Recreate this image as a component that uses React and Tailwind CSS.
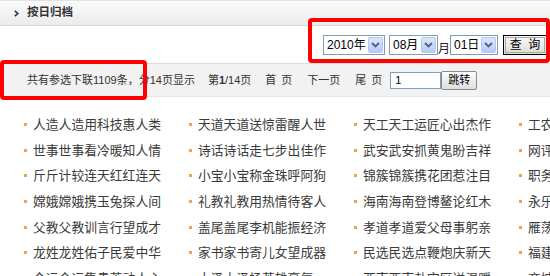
import React from "react";

const cols = [
  ["人造人造用科技惠人类", "世事世事看冷暖知人情", "斤斤计较连天红红连天", "嫦娥嫦娥携玉兔探人间", "父教父教训言行望成才", "龙姓龙姓佑子民爱中华", "今运今运集贵萃动人心"],
  ["天道天道送惊雷醒人世", "诗话诗话走七步出佳作", "小宝小宝称金珠呼阿狗", "礼教礼教用热情待客人", "盖尾盖尾李机能振经济", "家书家书寄儿女望成器", "大泽大泽扬英雄豪气"],
  ["天工天工运匠心出杰作", "武安武安抓黄鬼盼吉祥", "锦簇锦簇携花团惹注目", "海南海南登博鳌论红木", "孝道孝道爱父母事躬亲", "民选民选点鞭炮庆新天", "西南西南赴灾区送温暖"],
  ["工农工农建国家展宏图", "网评网评论时事说真话", "职务职务尽责任为人民", "永乐永乐兴盛世颂太平", "雁荡雁荡观奇峰赏秀水", "福建福建迎宾客话团圆", "商城商城聚百货惠万家"],
];

const rows = [0, 1, 2, 3, 4, 5, 6];

function Arrow() {
  return (
    <div className="w-[15px] h-[16px] mr-[1px] rounded-[2px] border border-[#b5c8f2] bg-gradient-to-b from-[#dde7fc] to-[#b7cbf6] flex items-center justify-center">
      <svg width="9" height="6" viewBox="0 0 9 6">
        <path d="M1 1 L4.5 4.5 L8 1" fill="none" stroke="#4d6185" strokeWidth="1.8" />
      </svg>
    </div>
  );
}

function Sel({ label, w }) {
  return (
    <div className={`${w} h-[20px] border border-[#7f9db9] bg-white flex items-center justify-between`}>
      <span className="pl-[3px] text-[12px] text-black leading-none whitespace-nowrap">{label}</span>
      <Arrow />
    </div>
  );
}

export default function App() {
  return (
    <div
      className="relative w-[550px] h-[276px] overflow-hidden bg-white"
      style={{ fontFamily: '"Liberation Sans", "Noto Sans CJK SC", sans-serif' }}
    >
      {/* header */}
      <div className="h-[26px] border-t border-[#e2e2e2] border-b border-b-[#d9d9d9] bg-gradient-to-b from-[#fbfbfb] to-[#ebebeb] flex items-center pl-[14px]">
        <svg width="5" height="7" viewBox="0 0 5 7" className="mt-[1px]">
          <path d="M0.8 0.8 L3.8 3.5 L0.8 6.2" fill="none" stroke="#1d3557" strokeWidth="1.6" />
        </svg>
        <span className="ml-[8px] text-[11.5px] font-bold text-[#333]">按日归档</span>
      </div>

      {/* date row */}
      <div className="h-[37px] flex justify-end items-start pt-[9px] pr-[3px]">
        <Sel label="2010年" w="w-[62px]" />
        <div className="w-[4px]" />
        <Sel label="08月" w="w-[49px]" />
        <span className="w-[12px] text-[12px] text-[#222] self-end mb-[8px] leading-none text-center">月</span>
        <Sel label="01日" w="w-[48px]" />
        <div className="w-[5px]" />
        <div className="w-[44px] h-[20px] border border-black bg-gradient-to-b from-[#fafafa] to-[#dcdcd4] flex items-center justify-center">
          <div className="w-[40px] h-[16px] border border-[#a9a9a9] flex items-center justify-center text-[12px] text-black leading-none whitespace-nowrap">
            查&nbsp;&nbsp;询
          </div>
        </div>
      </div>

      {/* pagination bar */}
      <div className="h-[34px] bg-[#f2f2f2] border-t border-[#dcdcdc] border-b border-b-[#e6e6e6] flex items-center pl-[27px] text-[11px] text-[#333] whitespace-nowrap">
        <span>共有参选下联1109条，分14页显示</span>
        <span className="ml-[13px]">第<b>1</b>/14页</span>
        <span className="ml-[14px] flex gap-[5px]"><span>首</span><span>页</span></span>
        <span className="ml-[15px]">下一页</span>
        <span className="ml-[15px] flex gap-[5px]"><span>尾</span><span>页</span></span>
        <div className="ml-[8px] w-[51px] h-[17px] border border-[#7f9db9] bg-white flex items-center pl-[4px] text-[11px] text-black">1</div>
        <div className="w-[36px] h-[19px] border border-[#8a8a8a] rounded-[2px] bg-gradient-to-b from-[#fdfdfd] to-[#dedede] flex items-center justify-center text-[11px] text-black">跳转</div>
      </div>

      {/* list */}
      <div className="grid grid-cols-[165px_165px_165px_165px] pl-[24px] pt-[14px]">
        {rows.map((r) =>
          cols.map((c, ci) => (
            <div key={`${r}-${ci}`} className="h-[25.6px] flex items-center whitespace-nowrap">
              <div className="w-[3px] h-[3px] bg-[#e6a446] mt-[2px]" />
              <span className="ml-[6px] text-[12.8px] text-[#3a3a3a]" style={{ fontFamily: '"Noto Sans CJK SC", sans-serif' }}>{c[r]}</span>
            </div>
          ))
        )}
      </div>

      {/* annotation boxes */}
      <div className="absolute left-[308px] top-[18px] w-[242px] h-[45px] border-4 border-[#ff0000] rounded-[4px]" />
      <div className="absolute left-0 top-[60px] w-[147px] h-[40px] border-4 border-[#ff0000] rounded-[4px]" />
    </div>
  );
}
